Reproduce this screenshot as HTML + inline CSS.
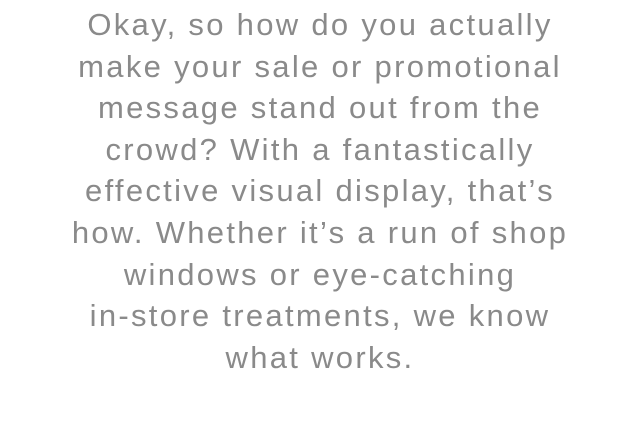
<!DOCTYPE html>
<html>
<head>
<meta charset="utf-8">
<style>
html,body{margin:0;padding:0;background:#fff;width:640px;height:448px;overflow:hidden;}
.t{position:absolute;left:0;top:4px;width:640px;text-align:center;
font-family:"Liberation Sans",sans-serif;font-size:31px;line-height:41.6px;
color:#8a8a8a;letter-spacing:2.3px;}
</style>
</head>
<body>
<div class="t">Okay, so how do you actually<br>make your sale or promotional<br>message stand out from the<br>crowd? With a fantastically<br>effective visual display, that’s<br>how. Whether it’s a run of shop<br>windows or eye-catching<br>in-store treatments, we know<br>what works.</div>
</body>
</html>
